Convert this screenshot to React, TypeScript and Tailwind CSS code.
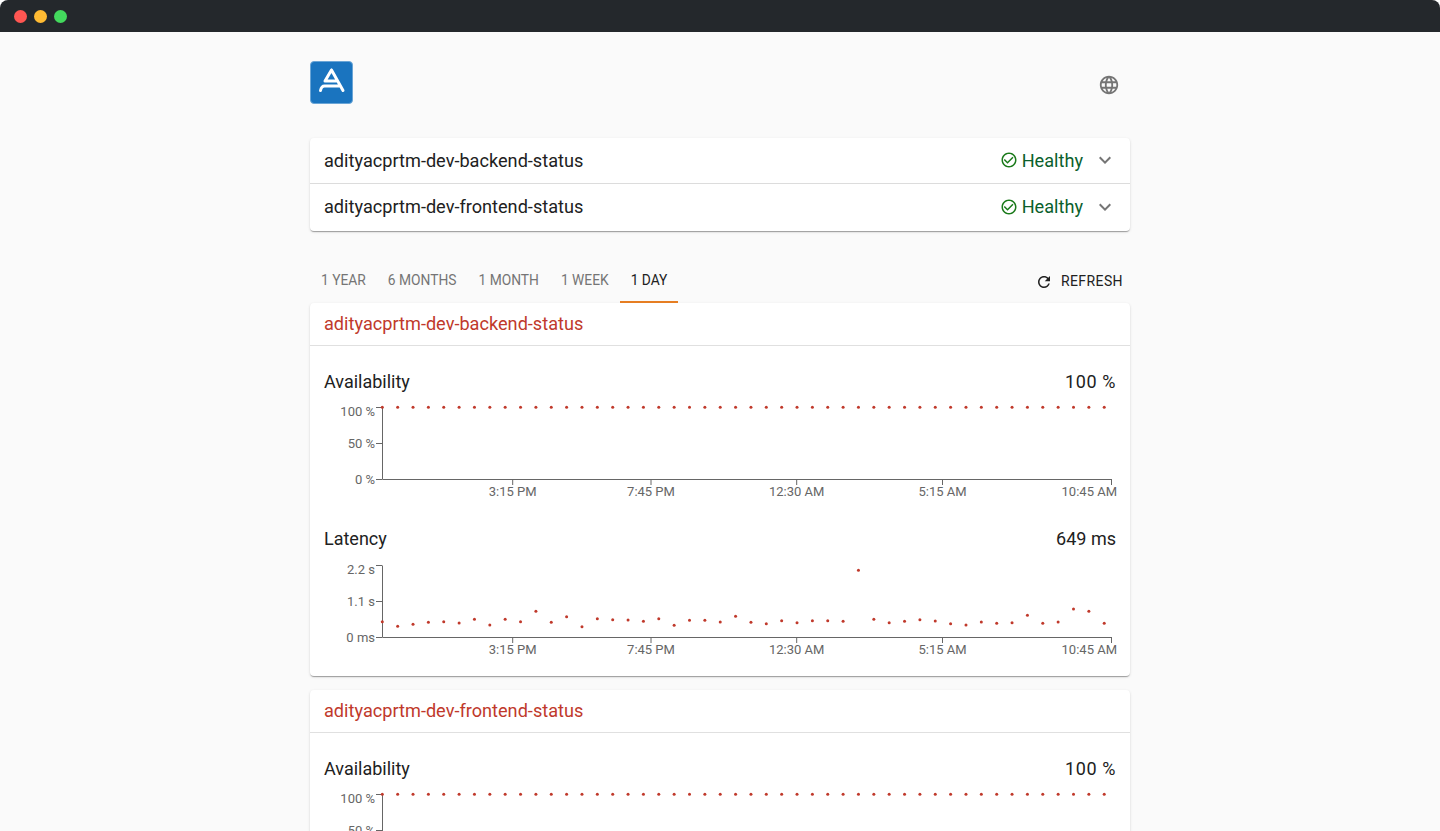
const STEP = 15.36

const latency = [
    56.7, 61.3, 59.3, 57.3, 56.7, 58, 54.3, 60, 54.3, 56.7, 46.3, 57.3, 51.7, 61.7, 53.7, 54.7,
    55, 56.3, 53.7, 60.3, 55.3, 55.3, 57, 51.3, 57.3, 58.7, 55.7, 57.7, 55.7, 55.7, 56.3, 5.3,
    54.3, 57.7, 56.3, 54.7, 56, 58.7, 60, 57, 58.3, 57.7, 50.3, 58.3, 57, 44, 46.3, 58.3,
]
const availability = latency.map(() => 0.3)

const xTicks = [
    { x: 188.7, label: '3:15 PM' },
    { x: 327, label: '7:45 PM' },
    { x: 472.7, label: '12:30 AM' },
    { x: 618.5, label: '5:15 AM' },
]

const TAB_LABELS = ['1 Year', '6 Months', '1 Month', '1 Week', '1 Day']
const shadow = 'shadow-[0_2px_1px_-1px_rgba(0,0,0,0.2),0_1px_1px_0_rgba(0,0,0,0.14),0_1px_3px_0_rgba(0,0,0,0.12)]'

interface ChartProps {
    top: number
    height: number
    points: number[]
    yLabels: { y: number; label: string }[]
}

function Chart({ top, height, points, yLabels }: ChartProps) {
    const bottom = top + 72
    return (
        <svg width="792" height={height} className="block overflow-visible">
            <path d={`M58.5 ${top + 0.5}V${bottom + 0.5}H787.5`} fill="none" stroke="#666" />
            {[0, 36, 72].map((d) => (
                <line key={d} x1="52" x2="58" y1={top + d + 0.5} y2={top + d + 0.5} stroke="#666" />
            ))}
            {yLabels.map((t) => (
                <text key={t.label} x="51" y={top + t.y} textAnchor="end" fontSize="13" fill="#666">
                    {t.label}
                </text>
            ))}
            {xTicks.map((t) => (
                <g key={t.label}>
                    <line x1={t.x} x2={t.x} y1={bottom} y2={bottom + 6} stroke="#666" />
                    <text x={t.x} y={bottom + 16.5} textAnchor="middle" fontSize="13" fill="#666">
                        {t.label}
                    </text>
                </g>
            ))}
            <line x1="787.5" x2="787.5" y1={bottom} y2={bottom + 6} stroke="#666" />
            <text x="793" y={bottom + 16.5} textAnchor="end" fontSize="13" fill="#666">
                10:45 AM
            </text>
            {points.map((v, i) => (
                <circle key={i} cx={58.3 + i * STEP} cy={top + v} r="1.5" fill="#c0392b" />
            ))}
        </svg>
    )
}

function MetricTitle({ name, value, wide }: { name: string; value: string; wide?: boolean }) {
    return (
        <div className="flex h-6 items-center justify-between text-[18px] text-[#212121]">
            <span>{name}</span>
            <span className={wide ? 'tracking-[0.6px]' : ''}>{value}</span>
        </div>
    )
}

function StatusRow({ name, last }: { name: string; last?: boolean }) {
    return (
        <div className={`flex items-center justify-between pl-[14px] pr-[13px] ${last ? 'h-[47px] pb-[1px]' : 'h-[46px] border-b border-[#dcdcdc]'}`}>
            <span className="text-[18.15px] text-[#212121]">{name}</span>
            <div className="flex items-center">
                <svg viewBox="0 0 24 24" className="h-[18px] w-[18px] fill-[#1b7a1b]">
                    <path d="M16.59 7.58L10 14.17l-3.59-3.58L5 12l5 5 8-8zM12 2C6.48 2 2 6.48 2 12s4.48 10 10 10 10-4.48 10-10S17.52 2 12 2zm0 18c-4.42 0-8-3.58-8-8s3.58-8 8-8 8 3.58 8 8-3.58 8-8 8z" />
                </svg>
                <span className="ml-[4px] text-[18.15px] text-[#0b5f2c]">Healthy</span>
                <svg viewBox="0 0 24 24" className="ml-[10px] h-6 w-6 fill-[#757575]">
                    <path d="M16.59 8.59L12 13.17 7.41 8.59 6 10l6 6 6-6z" />
                </svg>
            </div>
        </div>
    )
}

function StatusCard({ name }: { name: string }) {
    return (
        <div className={`mb-[14px] rounded bg-white ${shadow}`}>
            <div className="flex h-[43px] items-center border-b border-[#e0e0e0] px-[14px] pb-[1px] text-[18.15px] text-[#c0392b]">
                {name}
            </div>
            <div className="px-[14px] pt-[23px]">
                <MetricTitle name="Availability" value="100 %" wide />
                <Chart
                    top={14}
                    height={133}
                    points={availability}
                    yLabels={[
                        { y: 9, label: '100 %' },
                        { y: 41, label: '50 %' },
                        { y: 77, label: '0 %' },
                    ]}
                />
                <MetricTitle name="Latency" value="649 ms" />
                <Chart
                    top={15}
                    height={126}
                    points={latency}
                    yLabels={[
                        { y: 9, label: '2.2 s' },
                        { y: 41, label: '1.1 s' },
                        { y: 77, label: '0 ms' },
                    ]}
                />
            </div>
        </div>
    )
}

export default function App() {
    return (
        <div className="h-screen overflow-hidden bg-white [font-family:Roboto,sans-serif]">
            <div className="flex h-8 items-center gap-2 rounded-t-lg bg-[#24282c] pl-[14px]">
                <span className="h-[13px] w-[13px] rounded-full bg-[#ff5652]"></span>
                <span className="ml-[-1px] h-[13px] w-[13px] rounded-full bg-[#ffbb33]"></span>
                <span className="ml-[-1px] h-[13px] w-[13px] rounded-full bg-[#43d95d]"></span>
            </div>

            <div className="h-full bg-[#fafafa]">
                <div className="mx-auto w-[820px]">
                    <div className="flex h-[106px] items-center justify-between pr-[10px]">
                        <svg viewBox="0 0 43 43" className="mb-[5px] h-[43px] w-[43px]">
                            <rect x="0.5" y="0.5" width="42" height="42" rx="3.5" fill="#1a74bf" stroke="#6aa5d6" />
                            <path
                                d="M15 20H26M21.5 9L15 20M21.5 9L33 29.5M10.5 29.5Q11.5 25 14.5 25H29.5"
                                fill="none"
                                stroke="#fff"
                                strokeWidth="3"
                                strokeLinecap="round"
                                strokeLinejoin="round"
                            />
                        </svg>
                        <svg viewBox="0 0 24 24" className="h-[22px] w-[22px] fill-[#757575]">
                            <path d="M11.99 2C6.47 2 2 6.48 2 12s4.47 10 9.99 10C17.52 22 22 17.52 22 12S17.52 2 11.99 2zm6.93 6h-2.95c-.32-1.25-.78-2.45-1.38-3.56 1.84.63 3.37 1.91 4.33 3.56zM12 4.04c.83 1.2 1.48 2.53 1.91 3.96h-3.82c.43-1.43 1.08-2.76 1.91-3.96zM4.26 14C4.1 13.36 4 12.69 4 12s.1-1.36.26-2h3.38c-.08.66-.14 1.32-.14 2 0 .68.06 1.34.14 2H4.26zm.82 2h2.95c.32 1.25.78 2.45 1.38 3.56-1.84-.63-3.37-1.9-4.33-3.56zm2.95-8H5.08c.96-1.66 2.49-2.93 4.33-3.56C8.81 5.55 8.35 6.75 8.03 8zM12 19.96c-.83-1.2-1.48-2.53-1.91-3.96h3.82c-.43 1.43-1.08 2.76-1.91 3.96zM14.34 14H9.66c-.09-.66-.16-1.32-.16-2 0-.68.07-1.35.16-2h4.68c.09.65.16 1.32.16 2 0 .68-.07 1.34-.16 2zm.25 5.56c.6-1.11 1.06-2.31 1.38-3.56h2.95c-.96 1.65-2.49 2.93-4.33 3.56zM16.36 14c.08-.66.14-1.32.14-2 0-.68-.06-1.34-.14-2h3.38c.16.64.26 1.31.26 2s-.1 1.36-.26 2h-3.38z" />
                        </svg>
                    </div>

                    <div className={`rounded bg-white ${shadow}`}>
                        <StatusRow name="adityacprtm-dev-backend-status" />
                        <StatusRow name="adityacprtm-dev-frontend-status" last />
                    </div>

                    <div className="mt-6 flex h-12 items-center justify-between">
                        <div className="flex h-full">
                            {TAB_LABELS.map((tab) => (
                                <div
                                    key={tab}
                                    className={`flex items-center border-b-2 px-[11px] pt-[4px] text-[13.8px] uppercase ${
                                        tab === '1 Day' ? 'border-[#e67e22] text-[#212121]' : 'border-transparent text-[#757575]'
                                    }`}
                                >
                                    {tab}
                                </div>
                            ))}
                        </div>
                        <div className="flex items-center pr-[7px] pt-[5px] text-[14px] uppercase tracking-[0.4px] text-[#212121]">
                            <svg viewBox="0 0 24 24" className="mr-[8px] h-[18px] w-[18px] fill-[#212121]">
                                <path d="M17.65 6.35C16.2 4.9 14.21 4 12 4c-4.42 0-7.99 3.58-7.99 8s3.57 8 7.99 8c3.73 0 6.84-2.55 7.73-6h-2.08c-.82 2.33-3.04 4-5.65 4-3.31 0-6-2.69-6-6s2.69-6 6-6c1.66 0 3.14.69 4.22 1.78L13 11h7V4l-2.35 2.35z" />
                            </svg>
                            Refresh
                        </div>
                    </div>

                    <StatusCard name="adityacprtm-dev-backend-status" />
                    <StatusCard name="adityacprtm-dev-frontend-status" />
                </div>
            </div>
        </div>
    )
}
